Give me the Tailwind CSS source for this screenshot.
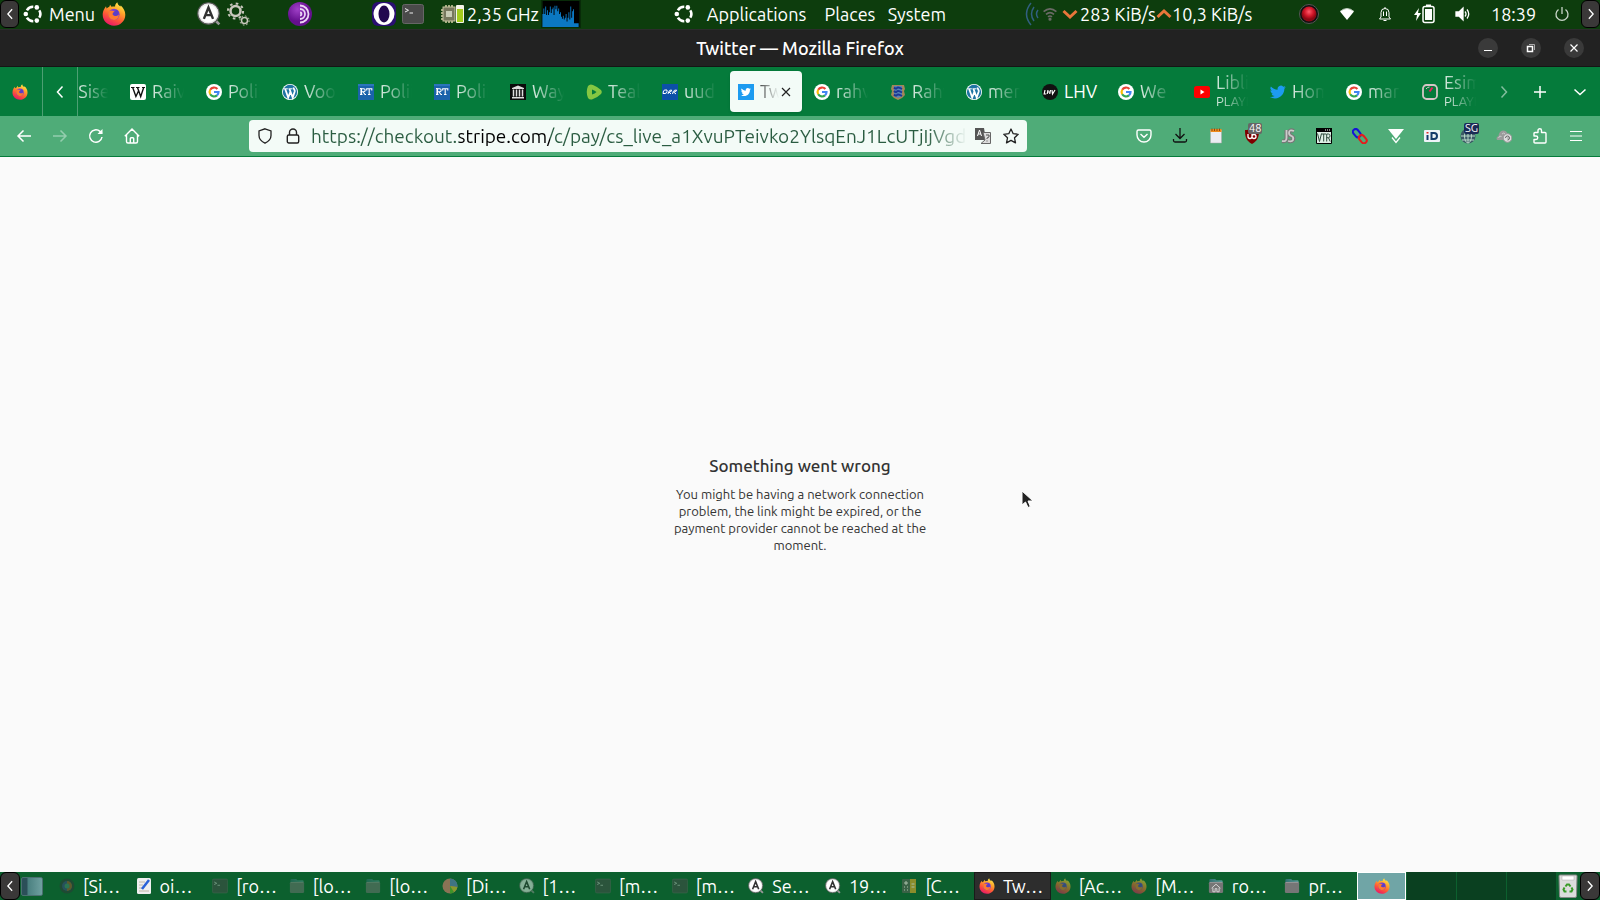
<!DOCTYPE html>
<html lang="en">
<head>
    <meta charset="UTF-8">
    <meta name="viewport" content="width=device-width, initial-scale=1.0">
    <title>Twitter — Mozilla Firefox</title>
    <script src="https://cdn.jsdelivr.net/npm/@tailwindcss/browser@4"></script>
</head>
<body class="flex h-screen flex-col overflow-hidden bg-[#fafafa] font-['Ubuntu','Noto_Sans',sans-serif] text-lg leading-6 text-white">

    <!-- Shared icons -->
    <svg class="absolute size-0" aria-hidden="true">
        <defs>
            <linearGradient id="foxFire" x1=".8" y1="0" x2=".3" y2="1">
                <stop offset="0" stop-color="#fff44f"/><stop offset=".35" stop-color="#ffa52b"/>
                <stop offset=".65" stop-color="#ff5a36"/><stop offset="1" stop-color="#e8146a"/>
            </linearGradient>
            <radialGradient id="torFill" cx=".4" cy=".3"><stop offset="0" stop-color="#a040c8"/><stop offset="1" stop-color="#65108e"/></radialGradient>
            <radialGradient id="redFill" cx=".5" cy=".35"><stop offset="0" stop-color="#ff5a6a"/><stop offset=".6" stop-color="#d01528"/><stop offset="1" stop-color="#8a0814"/></radialGradient>
            <linearGradient id="folderTab"><stop offset="0" stop-color="#2f6f6f"/><stop offset="1" stop-color="#5b9a98"/></linearGradient>
        </defs>
        <symbol id="firefox" viewBox="0 0 24 24">
            <path d="M2.500 6.500 4 4.200l.6 2.300c.8-.9 1.700-1.400 2.700-1.700l.8-2 1.400 2c1.200-.4 2.400-.5 3.600-.3C13 3 13.800 1.500 15.300.3c.3 2 1.400 3 3 4.300l.5-1.100C21.500 6 23.300 9 23.300 12.700 23.300 19 18.200 23.700 12 23.700S.7 19 .7 12.800c0-2.400.6-4.500 1.800-6.300z" fill="url(#foxFire)"/>
            <circle cx="12" cy="12.300" r="5.600" fill="#7a3fd1"/>
            <path d="M6.500 9.500c1.800-1.700 3.200-1 5-.4 1 .3 2.500.2 3 .9-.8 1.300-3 1-3.300 2.400 1.600 1.800 3.800 2.300 5.500.2C17 17 13.500 18.800 10 17.600 6.800 16.500 5.500 12.500 6.500 9.500z" fill="#ff7a2e"/>
            <path d="M10.500 12.300c1.400 2.400 4.600 2.200 6 0 .5-2.500-.5-4-2.300-4.600-1 1.200-3.700 2.600-3.700 4.600z" fill="#5b3ec6"/>
        </symbol>
        <symbol id="ubuntu" viewBox="0 0 20 20">
            <g fill="none" stroke="currentColor" stroke-width="2.600">
                <path d="M3.900 6.300A7.200 7.200 0 0 1 10.300 2.800"/><path d="M16.300 6.300a7.200 7.200 0 0 1 0 7.400"/><path d="M3.900 13.700a7.200 7.200 0 0 0 6.400 3.500"/>
            </g>
            <circle cx="2.800" cy="10" r="2.300" fill="currentColor"/><circle cx="13.800" cy="3.400" r="2.300" fill="currentColor"/><circle cx="13.800" cy="16.600" r="2.300" fill="currentColor"/>
        </symbol>
        <symbol id="finder" viewBox="0 0 22 22">
            <path d="m16 16 4.500 4.500" stroke="#999" stroke-width="2.500"/>
            <circle cx="10.500" cy="10.500" r="9.800" fill="#e9e9e9" stroke="#555"/><circle cx="10.500" cy="10.500" r="8" fill="#fff"/>
            <path d="m6.300 15.500 4.200-10.500 4.200 10.500M7.800 12h5.400" fill="none" stroke="#333" stroke-width="2.200"/>
        </symbol>
        <symbol id="terminal" viewBox="0 0 22 20">
            <rect x=".5" y=".5" width="21" height="19" rx="2" fill="#4a4a4a" stroke="#666"/>
            <path d="m3 4.500 3.500 1.800L3 8M7.500 9H11" fill="none" stroke="#eee"/>
        </symbol>
        <symbol id="folder" viewBox="0 0 18 18">
            <path d="M1.500 2.500Q1.500 1 3 1h5l1.500 1.500H15q1.500 0 1.500 1.500v4h-15z" fill="url(#folderTab)"/>
            <rect x="1" y="4.500" width="16" height="12.500" rx="1.500" fill="#767676"/><path d="M2 5h14" stroke="#9a9a9a"/>
        </symbol>
        <symbol id="google" viewBox="0 0 16 16">
            <circle cx="8" cy="8" r="8" fill="#fff"/>
            <g fill="none" stroke-width="2.200">
                <path d="M4.200 5.700A4.500 4.500 0 0 1 11.400 5" stroke="#ea4335"/><path d="M4.200 10.300a4.500 4.500 0 0 1 0-4.600" stroke="#fbbc05"/>
                <path d="M11 11.400a4.500 4.500 0 0 1-6.800-1.100" stroke="#34a853"/><path d="M8 8h4.500a4.500 4.500 0 0 1-1.500 3.400" stroke="#4285f4"/>
            </g>
        </symbol>
        <symbol id="wordpress" viewBox="0 0 16 16">
            <circle cx="8" cy="8" r="8" fill="#fff"/><circle cx="8" cy="8" r="7.200" fill="#1e74a3"/>
            <path d="M1.800 4.800h4M6.500 4.800h4" stroke="#fff"/>
            <path d="m3.200 5 3 8.500L8.300 8M7.500 5l3.200 8.500 2-6c.4-1.800-1.500-2.500-.9-4" fill="none" stroke="#fff" stroke-width="1.800"/>
        </symbol>
        <symbol id="rt" viewBox="0 0 16 16">
            <path d="M0 0h16v16H0z" fill="#1a63ab"/><path d="M0 1h16" stroke="#3d88cc"/>
            <path d="M2 4.500h1v6H2h2.500M3.500 4.500v6M3 4.700h2.500q1.700 0 1.700 1.500T5.500 7.700h-2M5 7.700l2 2.800h1M8.700 6.500v-1.800h5.100v1.800M11.200 4.700v5.800M10 10.500h2.500" fill="none" stroke="#fff" stroke-width="1.100"/>
        </symbol>
        <symbol id="bird" viewBox="0 0 24 24">
            <path fill="currentColor" d="M23.600 4.900c-.9.400-1.800.7-2.800.8 1-.6 1.800-1.600 2.200-2.700-1 .6-2 1-3.100 1.200a4.900 4.900 0 0 0-8.400 4.500C7.400 8.500 3.800 6.500 1.400 3.600a4.900 4.900 0 0 0 1.500 6.500c-.8 0-1.500-.2-2.200-.6v.1c0 2.400 1.700 4.400 3.900 4.800-.7.200-1.500.2-2.200.1.600 2 2.400 3.400 4.600 3.400A9.900 9.900 0 0 1 0 19.500 13.900 13.900 0 0 0 7.500 21.700c9.100 0 14.300-7.700 14-14.600 1-.6 1.500-1.300 2.100-2.200z"/>
        </symbol>
        <symbol id="chevron" viewBox="0 0 8 14"><path d="m1.500 1.500 5 5.500-5 5.500" fill="none" stroke="currentColor" stroke-width="1.500"/></symbol>
    </svg>

    <!-- Desktop panel -->
    <header class="flex h-[30px] shrink-0 items-center justify-between border-b border-[#2c2c2c] bg-[#0d3d0d] pb-px">
        <div class="flex w-[584px] items-center">
            <button class="flex h-7 w-[19px] items-center justify-center rounded-md border border-black bg-[#3a3838]" aria-label="Hide panel"><svg class="h-3 w-2 rotate-180"><use href="#chevron"/></svg></button>
            <button class="ml-1 flex w-[79px] items-center gap-[6px]"><svg class="size-5 shrink-0"><use href="#ubuntu"/></svg>Menu</button>
            <svg class="size-6"><use href="#firefox"/></svg>
            <svg class="ml-[71px] size-6"><use href="#finder"/></svg>
            <svg class="ml-[5px] size-6" viewBox="0 0 24 24" fill="none" stroke="#c9c7bd">
                <circle cx="9.500" cy="9" r="5" stroke-width="2.500"/><circle cx="9.500" cy="9" r="7.600" stroke-width="2" stroke-dasharray="2.600 3.370"/>
                <circle cx="18.500" cy="18.500" r="3" stroke-width="1.500"/><circle cx="18.500" cy="18.500" r="4.600" stroke-dasharray="1.600 2"/>
            </svg>
            <svg class="ml-[38px] size-6" viewBox="0 0 24 24" fill="none" stroke="#ead5f4" stroke-width="1.800">
                <circle cx="12" cy="12" r="12" fill="url(#torFill)" stroke="none"/><path d="M12 3.500a8.500 8.500 0 0 1 0 17M12 7a5 5 0 0 1 0 10M12 10.500a1.500 1.500 0 0 1 0 3"/>
            </svg>
            <svg class="ml-[60px] size-6" viewBox="0 0 24 24">
                <rect width="24" height="24" rx="6" fill="#2a0f72"/><ellipse cx="12" cy="12" rx="10.500" ry="11" fill="#fff"/><ellipse cx="12" cy="12" rx="5.500" ry="8.500" fill="#22084f"/>
            </svg>
            <svg class="ml-[6px] h-5 w-[22px]"><use href="#terminal"/></svg>
            <svg class="ml-4 h-5 w-6" viewBox="0 0 24 20">
                <path d="M1 6h3M1 9h3M1 12h3M1 15h3M6 1v3M9 1v3M12 1v3M6 16v3M9 16v3M12 16v3" stroke="#d8cfa8" stroke-width="1.500"/>
                <rect x="3" y="3" width="12" height="14" fill="#77785e" stroke="#c8c3a0"/><rect x="6" y="7" width="6" height="6" fill="#c8cbb5"/>
                <rect x="16" y="1" width="8" height="18" rx="1" fill="#f4f4e8"/><path d="M17 5h6v13h-6z" fill="#a3cc1c"/>
            </svg>
            <span class="ml-[3px] w-[74px] whitespace-nowrap">2,35 GHz</span>
            <svg class="h-7 w-10 shrink-0 border border-[#082a08]" viewBox="0 0 40 28">
                <path d="M0 0h40v28H0z" fill="#000"/>
                <path d="M0 28V14h1V8h1v6h1V6h1v9h1v-5h1v5h1v-3h1v-6h1v7h1V9h1v-2h1v8h1V5h1v4h1V5h1v6h1V8h1v6h1v-2h1v5h1v2h1v-3h1v4h1v-2h1v-4h1v8h1v-4h1v-6h1v8h1V6h1v12h1v-7h1v-2h1v15h5v4z" fill="#0b78c2"/>
            </svg>
        </div>
        <nav class="ml-3 flex w-[272px] shrink-0 items-center">
            <svg class="mr-1 size-5 shrink-0"><use href="#ubuntu"/></svg>
            <button class="w-[117px] text-center">Applications</button>
            <button class="w-[70px] text-center">Places</button>
            <button class="w-[61px] text-right">System</button>
        </nav>
        <div class="flex w-[576px] items-center">
            <svg class="h-6 w-4 shrink-0" viewBox="0 0 16 24" fill="none" stroke="#315f80" stroke-width="1.500"><path d="M7 1Q-2 12 7 23M10 5q-5 7 0 14M14 8q-3 4 0 8"/></svg>
            <svg class="ml-[2px] h-4 w-4 shrink-0" viewBox="0 0 20 16" fill="none" stroke="#6a6a66" stroke-width="2"><path d="M2 5q8-7 16 0M5 8.500q5-4.500 10 0M7.500 11.500q2.500-2 5 0"/><circle cx="10" cy="14.500" r="1"/></svg>
            <svg class="ml-1 h-3 w-4 shrink-0" viewBox="0 0 16 12" fill="none" stroke="#e8763a" stroke-width="3"><path d="m1.500 3 6.500 6L14.500 3"/></svg>
            <span class="ml-[2px] w-[76px] whitespace-nowrap">283 KiB/s</span>
            <svg class="h-3 w-4 shrink-0" viewBox="0 0 16 12" fill="none" stroke="#e8763a" stroke-width="3"><path d="M1.500 9 8 3l6.500 6"/></svg>
            <span class="w-[127px] whitespace-nowrap">10,3 KiB/s</span>
            <svg class="size-5 shrink-0" viewBox="0 0 20 20"><circle cx="10" cy="10" r="9.500" fill="#111" stroke="#555"/><circle cx="10" cy="10" r="7.500" fill="url(#redFill)"/></svg>
            <svg class="ml-5 h-4 w-4 shrink-0" viewBox="0 0 16 16"><path d="M1 5.500Q8-.5 15 5.500L8 14z" fill="#fff"/><path d="M1 5.500Q8-.5 15 5.500" stroke="#b8c8b8" fill="none"/></svg>
            <svg class="ml-[22px] size-4 shrink-0" viewBox="0 0 16 16" fill="none" stroke="#fff"><path d="M4 11V6.500a4 4 0 0 1 8 0V11l1.500 2h-11zM6.500 14.500h3M6.500 5.500V10M9.500 5.500V10M8 1v1.500"/></svg>
            <svg class="ml-5 h-5 w-[22px] shrink-0" viewBox="0 0 22 20"><path d="M6 4 1 11h3l-1 6 5-8H5z" fill="#fff"/><rect x="10" y="2.500" width="11" height="16" rx="2" fill="none" stroke="#fff" stroke-width="1.500"/><path d="M12 5h7v11h-7zM13 .5h5v2h-5z" fill="#fff"/></svg>
            <svg class="ml-5 size-4 shrink-0" viewBox="0 0 16 16" fill="none" stroke="#fff" stroke-width="1.300"><path d="M1 6h3l4-4v12l-4-4H1z" fill="#fff"/><path d="M10 5.500q2 2.500 0 5M12 3.500q3.500 4.500 0 9"/></svg>
            <time class="ml-5 w-[47px] whitespace-nowrap">18:39</time>
            <button class="ml-4 shrink-0" aria-label="Power"><svg class="size-4" viewBox="0 0 16 16" fill="none" stroke="#c8d5c8" stroke-width="1.300"><path d="M4.500 3.500a6 6 0 1 0 7 0M8 1v7"/></svg></button>
            <button class="ml-auto flex h-7 w-[19px] shrink-0 items-center justify-center rounded-md border border-black bg-[#3a3838]" aria-label="Hide panel"><svg class="h-3 w-2"><use href="#chevron"/></svg></button>
        </div>
    </header>

    <!-- Window title -->
    <div class="grid h-[37px] shrink-0 grid-cols-[1fr_auto_1fr] items-center border-b border-[#151515] bg-[#222] pb-px">
        <h1 class="col-start-2 text-lg leading-6 font-medium">Twitter — Mozilla Firefox</h1>
        <div class="flex justify-end gap-[23px] pr-4">
            <button class="flex size-5 items-center justify-center rounded-full bg-[#3a3a3a]" aria-label="Minimize"><svg class="size-4" viewBox="0 0 16 16"><path d="M4 10.500h8" stroke="#fff"/></svg></button>
            <button class="flex size-5 items-center justify-center rounded-full bg-[#3a3a3a]" aria-label="Restore"><svg class="size-4" viewBox="0 0 16 16" fill="none" stroke="#fff"><path d="M4.500 6.500h5v5h-5z" stroke-width="1.500"/><path d="M6 4.500h5.500V10" stroke="#aaa"/></svg></button>
            <button class="flex size-5 items-center justify-center rounded-full bg-[#3a3a3a]" aria-label="Close"><svg class="size-4" viewBox="0 0 16 16"><path d="m4.500 4.500 7 7m0-7-7 7" stroke="#fff" stroke-width="1.200"/></svg></button>
        </div>
    </div>

    <!-- Tabs -->
    <div class="flex h-[49px] shrink-0 bg-[#057b3b]">
        <button class="flex w-[43px] shrink-0 items-center justify-center border-r border-[#4d9f73] pr-[2px]" aria-label="Firefox View"><svg class="size-4"><use href="#firefox"/></svg></button>
        <button class="flex w-[35px] shrink-0 items-center justify-center border-r border-[#4d9f73]" aria-label="Scroll tabs left"><svg class="h-[14px] w-2 rotate-180"><use href="#chevron"/></svg></button>
        <div class="flex min-w-0 flex-1 overflow-hidden" role="tablist">
            <button role="tab" class="flex w-[42px] shrink-0 items-center"><span class="w-8 overflow-hidden pb-[2px] whitespace-nowrap text-white/80 [mask-image:linear-gradient(90deg,#000_10%,transparent_95%)]">Sise</span></button>
            <button role="tab" class="flex w-[76px] shrink-0 items-center gap-[6px] px-[10px]">
                <svg class="size-4 shrink-0" viewBox="0 0 16 16"><rect width="16" height="16" rx="2" fill="#fff"/><path d="M1 3.500h3.500M6 3.500h3.500M12 3.500h3" stroke="#111"/><path d="m2.700 3.500 3.200 9L8.500 7M7.500 3.500l3.200 9 3-9" fill="none" stroke="#111" stroke-width="1.400"/></svg>
                <span class="w-[34px] overflow-hidden pb-[2px] whitespace-nowrap text-left text-white/80 [mask-image:linear-gradient(90deg,#000_10%,transparent_95%)]">Raivo</span>
            </button>
            <button role="tab" class="flex w-[76px] shrink-0 items-center gap-[6px] px-[10px]">
                <svg class="size-4 shrink-0"><use href="#google"/></svg>
                <span class="w-[34px] overflow-hidden pb-[2px] whitespace-nowrap text-left text-white/80 [mask-image:linear-gradient(90deg,#000_10%,transparent_95%)]">Polii</span>
            </button>
            <button role="tab" class="flex w-[76px] shrink-0 items-center gap-[6px] px-[10px]">
                <svg class="size-4 shrink-0"><use href="#wordpress"/></svg>
                <span class="w-[34px] overflow-hidden pb-[2px] whitespace-nowrap text-left text-white/80 [mask-image:linear-gradient(90deg,#000_10%,transparent_95%)]">Voo</span>
            </button>
            <button role="tab" class="flex w-[76px] shrink-0 items-center gap-[6px] px-[10px]">
                <svg class="size-4 shrink-0"><use href="#rt"/></svg>
                <span class="w-[34px] overflow-hidden pb-[2px] whitespace-nowrap text-left text-white/80 [mask-image:linear-gradient(90deg,#000_10%,transparent_95%)]">Polii</span>
            </button>
            <button role="tab" class="flex w-[76px] shrink-0 items-center gap-[6px] px-[10px]">
                <svg class="size-4 shrink-0"><use href="#rt"/></svg>
                <span class="w-[34px] overflow-hidden pb-[2px] whitespace-nowrap text-left text-white/80 [mask-image:linear-gradient(90deg,#000_10%,transparent_95%)]">Polii</span>
            </button>
            <button role="tab" class="flex w-[76px] shrink-0 items-center gap-[6px] px-[10px]">
                <svg class="size-4 shrink-0" viewBox="0 0 16 16"><path d="M0 0h16v16H0z" fill="#0a0a0a"/><path d="m2 4 6-2.500L14 4v1H2zM2 13h12v1.500H2z" fill="#ddd"/><path d="M3.500 5.500v7M6.500 5.500v7M9.500 5.500v7M12.500 5.500v7" stroke="#ddd" stroke-width="1.500"/></svg>
                <span class="w-[34px] overflow-hidden pb-[2px] whitespace-nowrap text-left text-white/80 [mask-image:linear-gradient(90deg,#000_10%,transparent_95%)]">Way</span>
            </button>
            <button role="tab" class="flex w-[76px] shrink-0 items-center gap-[6px] px-[10px]">
                <svg class="size-4 shrink-0" viewBox="0 0 16 16"><path d="M2 2q2-2.500 5-1 5 2 8 5 1.500 2 0 4-3 3-8 5-3 1.500-5-1Q-.5 8 2 2z" fill="#85c742"/><path d="M6 5.500q3 1 4.500 2.500-1.500 1.500-4.500 2.500z" fill="#057b3b"/></svg>
                <span class="w-[34px] overflow-hidden pb-[2px] whitespace-nowrap text-left text-white/80 [mask-image:linear-gradient(90deg,#000_10%,transparent_95%)]">Teab</span>
            </button>
            <button role="tab" class="flex w-[76px] shrink-0 items-center gap-[6px] px-[10px]">
                <svg class="size-4 shrink-0" viewBox="0 0 16 16"><path d="M0 0h16v16H0z" fill="#0c50a8"/><path d="M1 9.500 1.500 7q.5-1 1.500-1h2v1.500q0 2-2 2zM6 10l.8-2.500Q7.200 6 9.500 6q.5 2-2.500 2l2 2M10.500 10l.8-2.500Q11.700 6 14.500 6q.3 2-3 2l2.500 2" fill="none" stroke="#fff"/></svg>
                <span class="w-[34px] overflow-hidden pb-[2px] whitespace-nowrap text-left text-white/80 [mask-image:linear-gradient(90deg,#000_10%,transparent_95%)]">uudi</span>
            </button>
            <div class="flex w-[76px] shrink-0 items-center px-[2px]">
                <div class="flex h-[41px] w-full items-center rounded bg-[#f3fbf7] pl-2 text-black shadow">
                    <button role="tab" aria-selected="true" class="flex items-center gap-[6px]">
                        <svg class="size-4 shrink-0" viewBox="0 0 16 16"><path d="M0 0h16v16H0z" fill="#1d9bf0"/><use href="#bird" x="3" y="3" width="10" height="10" color="#fff"/></svg>
                        <span class="w-[19px] overflow-hidden pb-[2px] whitespace-nowrap text-left text-black/70 [mask-image:linear-gradient(90deg,#000,transparent)]">Twitter</span>
                    </button>
                    <button class="ml-[2px]" aria-label="Close tab"><svg class="size-[10px]" viewBox="0 0 10 10"><path d="m1 1 8 8m0-8L1 9" stroke="#222" stroke-width="1.200"/></svg></button>
                </div>
            </div>
            <button role="tab" class="flex w-[76px] shrink-0 items-center gap-[6px] px-[10px]">
                <svg class="size-4 shrink-0"><use href="#google"/></svg>
                <span class="w-[34px] overflow-hidden pb-[2px] whitespace-nowrap text-left text-white/80 [mask-image:linear-gradient(90deg,#000_10%,transparent_95%)]">rahva</span>
            </button>
            <button role="tab" class="flex w-[76px] shrink-0 items-center gap-[6px] px-[10px]">
                <svg class="size-4 shrink-0" viewBox="0 0 16 16"><path d="M2 1h12l1 4-1 2 1 4-3 3-4 2-4-2-3-3 1-4-1-2z" fill="#a4865a"/><path d="M4 2h8v10l-4 2-4-2z" fill="#5a83b5"/><path d="M4 3.500q2 2 3 .5t5 1M4 7q2 2 3 .5t5 1M4 10.500q2 2 3 .5t5 1" fill="none" stroke="#1b3795" stroke-width="2"/></svg>
                <span class="w-[34px] overflow-hidden pb-[2px] whitespace-nowrap text-left text-white/80 [mask-image:linear-gradient(90deg,#000_10%,transparent_95%)]">Rahv</span>
            </button>
            <button role="tab" class="flex w-[76px] shrink-0 items-center gap-[6px] px-[10px]">
                <svg class="size-4 shrink-0"><use href="#wordpress"/></svg>
                <span class="w-[34px] overflow-hidden pb-[2px] whitespace-nowrap text-left text-white/80 [mask-image:linear-gradient(90deg,#000_10%,transparent_95%)]">men</span>
            </button>
            <button role="tab" class="flex w-[76px] shrink-0 items-center gap-[6px] px-[10px]">
                <svg class="size-4 shrink-0" viewBox="0 0 16 16"><circle cx="8" cy="8" r="8" fill="#111"/><path d="m3 6-.8 4h2M6 6l-.8 4M8.500 6l-.8 4M5.700 8H8M10 6l.5 4 2.500-4" fill="none" stroke="#fff" stroke-width="1.200"/></svg>
                <span class="w-[34px] pb-[2px] whitespace-nowrap text-left">LHV</span>
            </button>
            <button role="tab" class="flex w-[76px] shrink-0 items-center gap-[6px] px-[10px]">
                <svg class="size-4 shrink-0"><use href="#google"/></svg>
                <span class="w-[34px] overflow-hidden pb-[2px] whitespace-nowrap text-left text-white/80 [mask-image:linear-gradient(90deg,#000_10%,transparent_95%)]">We C</span>
            </button>
            <button role="tab" class="flex w-[76px] shrink-0 items-center gap-[6px] px-[10px]">
                <svg class="size-4 shrink-0" viewBox="0 0 16 16"><rect y="2" width="16" height="12" rx="2.500" fill="#f00"/><path d="m6.500 5.500 4 2.500-4 2.500z" fill="#fff"/></svg>
                <span class="w-[34px] overflow-hidden pb-[2px] whitespace-nowrap text-left leading-5 text-white/80 [mask-image:linear-gradient(90deg,#000_10%,transparent_95%)]">Liblik<span class="block text-[13px] leading-[18px]">PLAYING</span></span>
            </button>
            <button role="tab" class="flex w-[76px] shrink-0 items-center gap-[6px] px-[10px]">
                <svg class="size-4 shrink-0 text-[#1d9bf0]"><use href="#bird"/></svg>
                <span class="w-[34px] overflow-hidden pb-[2px] whitespace-nowrap text-left text-white/80 [mask-image:linear-gradient(90deg,#000_10%,transparent_95%)]">Hom</span>
            </button>
            <button role="tab" class="flex w-[76px] shrink-0 items-center gap-[6px] px-[10px]">
                <svg class="size-4 shrink-0"><use href="#google"/></svg>
                <span class="w-[34px] overflow-hidden pb-[2px] whitespace-nowrap text-left text-white/80 [mask-image:linear-gradient(90deg,#000_10%,transparent_95%)]">mar</span>
            </button>
            <button role="tab" class="flex w-[76px] shrink-0 items-center gap-[6px] px-[10px]">
                <svg class="size-4 shrink-0" viewBox="0 0 16 16" fill="none"><rect x="1" y="1" width="14" height="14" rx="3.500" stroke="#d5c5c5" stroke-width="1.800"/><path d="M4 5q1.500-2 3.500-2" stroke="#d5c5c5"/><path d="m7.500 7.500 3-4" stroke="#e8215c" stroke-width="2"/></svg>
                <span class="w-[34px] overflow-hidden pb-[2px] whitespace-nowrap text-left leading-5 text-white/80 [mask-image:linear-gradient(90deg,#000_10%,transparent_95%)]">Esime<span class="block text-[13px] leading-[18px]">PLAYING</span></span>
            </button>
        </div>
        <div class="flex w-28 shrink-0 items-center">
            <button class="flex w-8 justify-center text-white/50" aria-label="Scroll tabs right"><svg class="h-[14px] w-2"><use href="#chevron"/></svg></button>
            <button class="flex w-10 justify-center" aria-label="New tab"><svg class="size-3" viewBox="0 0 12 12"><path d="M6 0v12M0 6h12" stroke="#fff" stroke-width="1.500"/></svg></button>
            <button class="flex w-10 justify-center" aria-label="List all tabs"><svg class="h-[14px] w-2 rotate-90"><use href="#chevron"/></svg></button>
        </div>
    </div>

    <!-- Navigation bar -->
    <div class="flex h-[41px] shrink-0 items-center border-b border-[#057b3b] bg-[#4fac78]">
        <div class="flex w-[249px] shrink-0 items-center gap-5 pl-4">
            <button aria-label="Back"><svg class="size-4" viewBox="0 0 16 16" fill="none" stroke="#fff" stroke-width="1.500"><path d="M15 8H2M7.500 2.500 2 8l5.500 5.500"/></svg></button>
            <button aria-label="Forward" disabled><svg class="size-4" viewBox="0 0 16 16" fill="none" stroke="#94cdae" stroke-width="1.500"><path d="M1 8h13M8.500 2.500 14 8l-5.500 5.500"/></svg></button>
            <button aria-label="Reload"><svg class="size-4" viewBox="0 0 16 16" fill="none" stroke="#fff" stroke-width="1.500"><path d="M14 9a6.200 6.200 0 1 1-2-5.600L14 5.500"/><path d="M14.500 1v5h-5z" fill="#fff" stroke="none"/></svg></button>
            <button aria-label="Home"><svg class="size-4" viewBox="0 0 16 16" fill="none" stroke="#fff" stroke-width="1.400"><path d="M.8 8.300 8 1l7.200 7.300M2.500 7v6.500q0 1.500 1.500 1.500h8q1.500 0 1.500-1.500V7M6.300 15v-4.500q0-.8.800-.8h1.800q.8 0 .8.800V15"/></svg></button>
        </div>
        <div class="flex h-8 min-w-0 flex-1 items-center rounded bg-[#f3fbf7] pl-2 pr-2 text-[#222]">
            <svg class="size-4 shrink-0" viewBox="0 0 16 16" fill="none" stroke="#222" stroke-width="1.300"><path d="M8 .8 14 3v4.500c0 3.500-2.500 6-6 7.700C4.500 13.500 2 11 2 7.500V3z"/></svg>
            <svg class="ml-3 size-4 shrink-0" viewBox="0 0 16 16" fill="none" stroke="#222" stroke-width="1.400"><rect x="2.300" y="7" width="11.400" height="8" rx="1.500"/><path d="M4.500 7V4.500a3.500 3.500 0 0 1 7 0V7"/></svg>
            <input type="text" aria-label="Address" value="https://checkout.stripe.com/c/pay/cs_live_a1XvuPTeivko2YlsqEnJ1LcUTjIjVgdE" class="ml-[10px] h-8 min-w-0 flex-1 bg-[linear-gradient(90deg,#2a5c41_148px,#000_148px,#000_239px,#2a5c41_239px)] bg-clip-text text-[19px] text-transparent outline-none [mask-image:linear-gradient(90deg,#000_94%,transparent)]">
            <button class="ml-2" aria-label="Translate page"><svg class="size-4" viewBox="0 0 16 16"><path d="M0 0h9l2 12H0z" fill="#555"/><path d="m2.500 8 2-6 2 6M3.200 6h2.600" stroke="#fff" fill="none"/><path d="M8 4.500h7.500v11H6L10 12z" fill="#ddd" stroke="#666"/><path d="M11 7h3v2l-2 1v1M12 12.500v1" stroke="#555" fill="none"/></svg></button>
            <button class="ml-3" aria-label="Bookmark"><svg class="size-4" viewBox="0 0 16 16" fill="none" stroke="#222" stroke-width="1.300" stroke-linejoin="round"><path d="m8 1 2.200 4.700 5 .6-3.700 3.500 1 5.100L8 12.400l-4.500 2.500 1-5.100L.8 6.300l5-.6z"/></svg></button>
        </div>
        <div class="flex w-[573px] shrink-0 items-center justify-end gap-5 pr-4">
            <button aria-label="Pocket"><svg class="size-4" viewBox="0 0 16 16" fill="none" stroke="#fff" stroke-width="1.400"><path d="M2.500 2h11q1.500 0 1.500 1.500V7a7 7 0 0 1-14 0V3.500Q1 2 2.500 2zM4.500 6 8 9.300 11.500 6"/></svg></button>
            <button aria-label="Downloads"><svg class="size-4" viewBox="0 0 16 16" fill="none" stroke="#111" stroke-width="1.300"><path d="M8 0v10M3.500 6 8 10.500 12.500 6M1.500 11v1.500q0 1.500 1.500 1.500h10q1.500 0 1.500-1.500V11"/></svg></button>
            <button aria-label="Notes"><svg class="size-4" viewBox="0 0 16 16"><path d="M2.500 2h11v13h-11z" fill="#ececf2" stroke="#aaa" stroke-width=".5"/><path d="M2.500 1h11v3h-11z" fill="#f08a1c"/><path d="M4 .5V3M6.500.5V3M9 .5V3M11.500.5V3" stroke="#8a4a15"/></svg></button>
            <button class="relative" aria-label="uBlock Origin">
                <svg class="size-4" viewBox="0 0 16 16"><path d="M8 0c2 1.500 4.500 2 7 2 0 7-1 10.500-7 14C2 12.500 1 9 1 2c2.500 0 5-.5 7-2z" fill="#800000"/><path d="M4 6v2.500a1.800 1.800 0 0 0 4 0V6M8 8.500a1.800 1.800 0 1 0 4 0 1.800 1.800 0 0 0-4 0" fill="none" stroke="#fff" stroke-width="1.300"/></svg>
                <span class="absolute -top-[5px] left-1 h-[11px] rounded-xs bg-[#666] px-px text-[11px] leading-[11px]">48</span>
            </button>
            <button aria-label="JavaScript toggle"><svg class="size-4" viewBox="0 0 16 16" fill="none" stroke-linejoin="round"><path d="M6.500 2v8q0 4-4.500 3M14 3Q9 1 9 5q0 2 2.500 3T13 12q-1 2-5 1" stroke="#777" stroke-width="4"/><path d="M6.500 2v8q0 4-4.500 3M14 3Q9 1 9 5q0 2 2.500 3T13 12q-1 2-5 1" stroke="#ccc" stroke-width="1.800"/></svg></button>
            <button aria-label="VTR"><svg class="size-4" viewBox="0 0 16 16"><path d="M.5.500h15v15H.5z" fill="#dff0e6" stroke="#000"/><path d="M0 0h16v4H0z"/><path d="M9 2h1M11 2h1M13 2h1" stroke="#fff"/><path d="m1.500 5.500 2 8 2-8M5.500 6h4.500M7.700 6v7.500M10.700 13.500V6h1.800q1.500 0 1.500 1.800t-1.500 1.900h-1.800M12.500 9.700l1.700 3.800" fill="none" stroke="#2d4a3a"/></svg></button>
            <button aria-label="Link tool"><svg class="size-4" viewBox="0 0 16 16" fill="none" stroke-width="2"><rect x="-4.500" y="-2.500" width="9" height="5.500" rx="2.700" transform="translate(5 5) rotate(50)" stroke="#1414d8"/><rect x="-4.500" y="-2.500" width="9" height="5.500" rx="2.700" transform="translate(11 11) rotate(50)" stroke="#e51c1c"/></svg></button>
            <button aria-label="Video download"><svg class="size-4" viewBox="0 0 16 16"><path d="M0 1h16L8 11z" fill="#fff"/><path d="m4 9.500 4 5 4-5" fill="none" stroke="#fff" stroke-width="1.300"/></svg></button>
            <button aria-label="iD"><svg class="size-4" viewBox="0 0 16 16"><rect y="2" width="16" height="12" rx="1" fill="#eef3f8"/><path d="M3.500 7v5" stroke="#143a6b" stroke-width="2"/><path d="M2.500 4h2v1.500h-2z" fill="#e0302a"/><path d="M7.500 5v6H10q3 0 3-3t-3-3z" fill="none" stroke="#143a6b" stroke-width="2"/></svg></button>
            <button class="relative" aria-label="Location proxy">
                <svg class="size-4" viewBox="0 0 16 16" fill="none" stroke="#b8d8c8"><circle cx="8" cy="8" r="7.500" fill="#3c5a66" stroke="none"/><ellipse cx="8" cy="8" rx="3.500" ry="7"/><path d="M8 1v14M1 8h14M2 12h12"/></svg>
                <span class="absolute -top-[5px] left-1 h-[11px] rounded-xs bg-[#1b2b55] px-px text-[11px] leading-[11px]">SG</span>
            </button>
            <button aria-label="Cloud tool"><svg class="size-4" viewBox="0 0 16 16" fill="none"><path d="M1 12q-1.500-3 1.500-4Q3 3 7 2.500q4 0 4.500 4L7 12z" fill="#9b9b9b"/><path d="M2.500 10q1-3 3-1.500M6 6q2-2 3 0" stroke="#ccc"/><circle cx="11.500" cy="10" r="4.300" fill="#ddd" stroke="#999"/><path d="M9.500 10a2 2 0 1 1 2 2M11.500 10h1" stroke="#666"/></svg></button>
            <button aria-label="Extensions"><svg class="size-4" viewBox="0 0 16 16" fill="none" stroke="#fff" stroke-width="1.400" stroke-linejoin="round"><path d="M2 7V5.500q0-1 1-1h3V2.500a1.700 1.700 0 0 1 3.500 0v2H13q1 0 1 1V14q0 1-1 1H3q-1 0-1-1v-2.500h2a1.700 1.700 0 0 0 0-3.500H2z"/></svg></button>
            <button aria-label="Application menu"><svg class="size-4" viewBox="0 0 16 16"><path d="M2 3.500h12M2 8h12M2 12.500h12" stroke="#fff" stroke-width="1.200"/></svg></button>
        </div>
    </div>

    <!-- Page -->
    <main class="relative flex min-h-0 flex-1 flex-col items-center justify-center pb-[22px] text-center text-[#333]">
        <h2 class="text-[17px] leading-6 font-medium">Something went wrong</h2>
        <p class="mt-2 text-[13px] leading-[17px]">You might be having a network connection<br>problem, the link might be expired, or the<br>payment provider cannot be reached at the<br>moment.</p>
        <svg class="absolute left-[1021px] top-[333px] h-[20px] w-[14px]" viewBox="0 0 14 20"><path d="M1 1v14l3.500-3 2.500 5.500 2.300-1L7 11h5z" fill="#222" stroke="#fff"/></svg>
    </main>

    <!-- Window list -->
    <footer class="flex h-7 shrink-0 items-center overflow-hidden bg-[#0c602e]">
        <button class="flex h-7 w-5 shrink-0 items-center justify-center rounded-md border border-black bg-[#3a3838]" aria-label="Hide panel"><svg class="h-3 w-2 rotate-180"><use href="#chevron"/></svg></button>
        <button class="ml-px h-[19px] w-[22px] shrink-0 rounded-xs border border-[#4a7070] bg-[linear-gradient(90deg,#2b4f58_5px,#4a8080_6px,#6fa0a0)]" aria-label="Show desktop"></button>
        <div class="ml-3 grid min-w-0 flex-1 grid-cols-17">
            <button class="flex h-7 items-center gap-2 overflow-hidden whitespace-nowrap pl-1"><svg class="size-4 shrink-0" viewBox="0 0 16 16"><circle cx="8" cy="8" r="7.500" fill="#1f4a33"/><circle cx="8" cy="8" r="5" fill="#27515b"/><path d="M8 3a5 5 0 0 1 0 10z" fill="#5b5a2c"/><circle cx="8" cy="8" r="2.500" fill="#2b7552"/></svg>[Si…</button>
            <button class="flex h-7 items-center gap-2 overflow-hidden whitespace-nowrap pl-1"><svg class="size-4 shrink-0" viewBox="0 0 16 16"><rect x="1" width="14" height="16" rx="1.500" fill="#efefef"/><path d="M3 4h6M3 7h4M3 10h3M3 13h10" stroke="#c0b8a8"/><path d="m6 11 7-9" stroke="#2a62d8" stroke-width="2.500"/></svg>oi…</button>
            <button class="flex h-7 items-center gap-2 overflow-hidden whitespace-nowrap pl-1"><svg class="size-4 shrink-0 opacity-50"><use href="#terminal"/></svg>[ro…</button>
            <button class="flex h-7 items-center gap-2 overflow-hidden whitespace-nowrap pl-1"><svg class="size-4 shrink-0 opacity-50"><use href="#folder"/></svg>[lo…</button>
            <button class="flex h-7 items-center gap-2 overflow-hidden whitespace-nowrap pl-1"><svg class="size-4 shrink-0 opacity-50"><use href="#folder"/></svg>[lo…</button>
            <button class="flex h-7 items-center gap-2 overflow-hidden whitespace-nowrap pl-1"><svg class="size-4 shrink-0" viewBox="0 0 16 16"><circle cx="8" cy="8" r="7.500" fill="#8a7355"/><path d="M8 8V.5A7.500 7.500 0 0 1 15.500 9z" fill="#3f7482"/><path d="m8 8 7.500 1A7.500 7.500 0 0 1 12 14z" fill="#8a9a2c"/><path d="m8 8 4 6.200q-2 1.300-4 1.300z" fill="#3f9428"/></svg>[Di…</button>
            <button class="flex h-7 items-center gap-2 overflow-hidden whitespace-nowrap pl-1"><svg class="size-4 shrink-0 opacity-50"><use href="#finder"/></svg>[1…</button>
            <button class="flex h-7 items-center gap-2 overflow-hidden whitespace-nowrap pl-1"><svg class="size-4 shrink-0 opacity-50"><use href="#terminal"/></svg>[m…</button>
            <button class="flex h-7 items-center gap-2 overflow-hidden whitespace-nowrap pl-1"><svg class="size-4 shrink-0 opacity-50"><use href="#terminal"/></svg>[m…</button>
            <button class="flex h-7 items-center gap-2 overflow-hidden whitespace-nowrap pl-1"><svg class="size-4 shrink-0"><use href="#finder"/></svg>Se…</button>
            <button class="flex h-7 items-center gap-2 overflow-hidden whitespace-nowrap pl-1"><svg class="size-4 shrink-0"><use href="#finder"/></svg>19…</button>
            <button class="flex h-7 items-center gap-2 overflow-hidden whitespace-nowrap pl-1"><svg class="size-4 shrink-0" viewBox="0 0 16 16"><rect x="1" y="1" width="14" height="14" rx="1" fill="#3a6246"/><path d="M9 1h6v14H9z" fill="#8b8d2b"/><path d="M3 5h4M5 3v4M3 9h1M6 9h1M3 12h1M6 12h1M10.500 6h3M10.500 9h3" stroke="#a9bfa9"/></svg>[C…</button>
            <button class="flex h-7 items-center gap-2 overflow-hidden whitespace-nowrap border border-[#1a1a1a] bg-[#2d2d2d] pl-1"><svg class="size-4 shrink-0"><use href="#firefox"/></svg>Tw…</button>
            <button class="flex h-7 items-center gap-2 overflow-hidden whitespace-nowrap pl-1"><svg class="size-4 shrink-0 opacity-50"><use href="#firefox"/></svg>[Ac…</button>
            <button class="flex h-7 items-center gap-2 overflow-hidden whitespace-nowrap pl-1"><svg class="size-4 shrink-0 opacity-50"><use href="#firefox"/></svg>[M…</button>
            <button class="flex h-7 items-center gap-2 overflow-hidden whitespace-nowrap pl-1"><svg class="size-4 shrink-0" viewBox="0 0 18 18"><use href="#folder" width="18" height="18"/><path d="M4 11.500 9 7l5 4.500M5.500 11v4.500H8V12h2v3.500h2.500V11" fill="none" stroke="#ddd"/></svg>ro…</button>
            <button class="flex h-7 items-center gap-2 overflow-hidden whitespace-nowrap pl-1"><svg class="size-4 shrink-0"><use href="#folder"/></svg>pr…</button>
        </div>
        <div class="flex shrink-0 gap-px">
            <button class="flex h-7 w-[49px] items-center justify-center border border-white bg-[#70a5a6]" aria-label="Workspace 1"><svg class="size-4"><use href="#firefox"/></svg></button>
            <button class="h-7 w-[49px] bg-[#0a4020]" aria-label="Workspace 2"></button>
            <button class="h-7 w-[49px] bg-[#0a4020]" aria-label="Workspace 3"></button>
            <button class="h-7 w-[49px] bg-[#0a4020]" aria-label="Workspace 4"></button>
        </div>
        <button class="ml-[2px] mr-[2px] shrink-0" aria-label="Trash"><svg class="h-6 w-5" viewBox="0 0 20 24"><path d="M1 2q0-1 1-1h16q1 0 1 1l-.5 20q0 1.500-1.500 1.500H3q-1.500 0-1.500-1.500z" fill="#dcdcdc" stroke="#888"/><path d="M4 2h12v4H4z" fill="#fff" stroke="#aaa" stroke-width=".5"/><path d="m7.500 12.500 1.500-2h2l1.500 2M13.500 13.500l1 2-1 2h-2M8.500 17.500h-2l-1-2 1-2" fill="none" stroke="#3a9b28" stroke-width="2"/></svg></button>
        <button class="flex h-7 w-5 shrink-0 items-center justify-center rounded-md border border-black bg-[#3a3838]" aria-label="Hide panel"><svg class="h-3 w-2"><use href="#chevron"/></svg></button>
    </footer>
</body>
</html>
